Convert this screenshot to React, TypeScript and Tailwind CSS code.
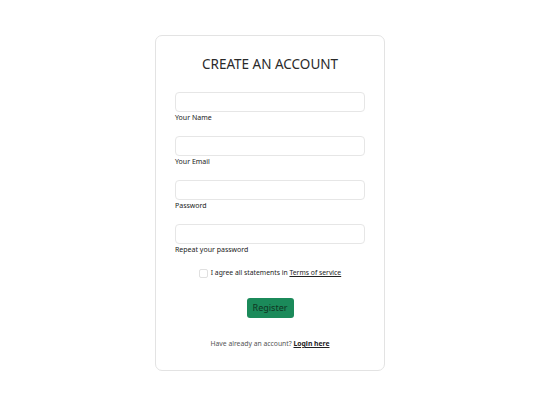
import React from "react";

function Field({ label, type }: { label: string; type: string }) {
  return (
    <div className="flex flex-col">
      <input
        type={type}
        className="h-[20px] w-full rounded-[4px] border border-[#e6e6e6] bg-white outline-none"
      />
      <label className="mt-[1px] text-[7px] leading-[10px] text-[#222]">{label}</label>
    </div>
  );
}

export default function App() {
  return (
    <div
      className="min-h-[405px] w-full bg-white pt-[35px]"
      style={{ fontFamily: '"Noto Sans", "Open Sans", sans-serif' }}
    >
      <div className="mx-auto flex w-[230px] flex-col rounded-[7px] border border-[#e3e3e3] bg-white px-[19px] pb-[21px] pt-[18px]">
        <h2 className="text-center text-[13.5px] leading-[20px] text-[#2a2a2a]">CREATE AN ACCOUNT</h2>
        <div className="mt-[18px] flex flex-col gap-[13px]">
          <Field label="Your Name" type="text" />
          <Field label="Your Email" type="email" />
          <Field label="Password" type="password" />
          <Field label="Repeat your password" type="password" />
        </div>
        <div className="mt-[13px] flex items-center justify-center gap-[3px]">
          <span className="h-[9px] w-[9px] rounded-[2px] border border-[#e0e0e0] bg-white" />
          <span className="text-[6.8px] leading-[10px] text-[#222]">
            I agree all statements in <a className="underline">Terms of service</a>
          </span>
        </div>
        <div className="mt-[20px] flex justify-center">
          <button className="h-[20px] w-[47px] rounded-[3px] bg-[#1b8a5a] text-[9px] leading-[20px] text-[#0f3522]">
            Register
          </button>
        </div>
        <p className="mt-[21px] text-center text-[6.8px] leading-[10px] text-[#555]">
          Have already an account? <a className="font-bold text-[#222] underline">Login here</a>
        </p>
      </div>
    </div>
  );
}
